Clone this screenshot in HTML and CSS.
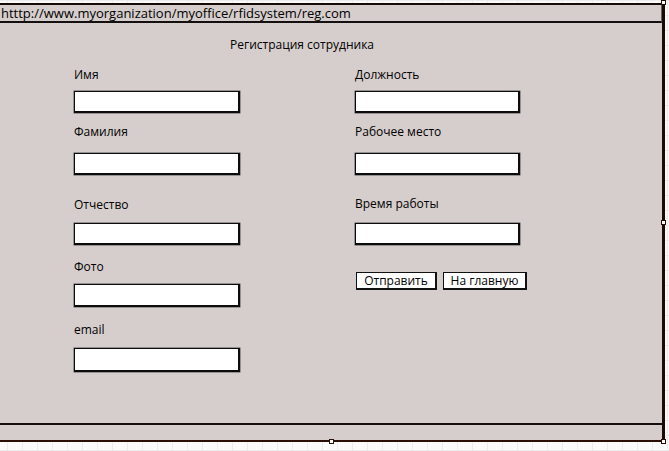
FILE: index.html
```html
<!DOCTYPE html>
<html lang="ru">
<head>
<meta charset="utf-8">
<title>Регистрация сотрудника</title>
<link rel="stylesheet" href="styles.css">
</head>
<body>
<div class="window">
  <div class="urlbar">htttp://www.myorganization/myoffice/rfidsystem/reg.com</div>
  <div class="content">
    <div class="title">Регистрация сотрудника</div>
    <div class="columns">
      <div class="col col-left">
        <div class="label">Имя</div>
        <div class="input in1"></div>
        <div class="label l2">Фамилия</div>
        <div class="input in2"></div>
        <div class="label l3">Отчество</div>
        <div class="input in3"></div>
        <div class="label l4">Фото</div>
        <div class="input in4"></div>
        <div class="label l5">email</div>
        <div class="input in5"></div>
      </div>
      <div class="col col-right">
        <div class="label">Должность</div>
        <div class="input in1"></div>
        <div class="label l2">Рабочее место</div>
        <div class="input in2"></div>
        <div class="label l3r">Время работы</div>
        <div class="input in3r"></div>
        <div class="buttons">
          <div class="btn btn-send">Отправить</div>
          <div class="btn btn-home">На главную</div>
        </div>
      </div>
    </div>
  </div>
  <div class="statusbar"></div>
  <span class="handle h-top"></span>
  <span class="handle h-right"></span>
  <span class="handle h-bottom"></span>
  <span class="handle h-corner"></span>
</div>
</body>
</html>
```
FILE: styles.css
```css
html, body {
  margin: 0;
  padding: 0;
}
body {
  width: 669px;
  height: 451px;
  overflow: hidden;
  background-color: #fafafa;
  background-image:
    linear-gradient(to right, #ececec 1px, transparent 1px),
    linear-gradient(to bottom, #ececec 1px, transparent 1px);
  background-size: 15px 15px;
  background-position: 7px 0;
  font-family: "Open Sans", "DejaVu Sans", sans-serif;
  color: #000;
}
.window {
  position: relative;
  margin-top: 3px;
  margin-left: -3px;
  width: 663px;
  background: #d6cecc;
  border-top: 2px solid #140a06;
  border-left: 2px solid #140a06;
  border-right: 3px solid #1e0a04;
  border-bottom: 2px solid #2a0e06;
}
.urlbar {
  height: 16px;
  padding-left: 2px;
  font-size: 13px;
  line-height: 17px;
  color: #000;
  border-bottom: 2px solid #141010;
  border-right: 1px solid #6a6262;
  white-space: nowrap;
  overflow: hidden;
}
.content {
  height: 400px;
  border-bottom: 2px solid #141010;
}
.title {
  padding-top: 14px;
  padding-left: 231px;
  font-size: 12px;
  line-height: 16px;
}
.columns {
  display: flex;
  padding-top: 14px;
  padding-left: 75px;
}
.col {
  display: flex;
  flex-direction: column;
  align-items: flex-start;
}
.col-left {
  width: 281px;
}
.label {
  font-size: 12px;
  line-height: 16px;
  height: 16px;
}
.input {
  background: #fff;
  border: 2px solid #0c0c0c;
  border-top-width: 1px;
  border-left-width: 1px;
  box-shadow: 0 0 0 0.5px #555;
  box-sizing: border-box;
  width: 166px;
  height: 22px;
}
.col-right .input {
  width: 165px;
}
.in1 { margin-top: 8px; }
.l2 { margin-top: 11px; }
.in2 { margin-top: 13px; }
.l3 { margin-top: 22px; }
.in3 { margin-top: 10px; }
.l4 { margin-top: 14px; }
.in4 { margin-top: 9px; height: 23px; }
.l5 { margin-top: 15px; }
.in5 { margin-top: 10px; height: 24px; }
.l3r { margin-top: 21px; }
.in3r { margin-top: 11px; }
.buttons {
  display: flex;
  gap: 6px;
  margin-top: 27px;
  margin-left: 1px;
}
.btn {
  box-sizing: border-box;
  height: 18px;
  background: #fff;
  border: 1px solid #111;
  border-right-width: 2px;
  border-bottom-width: 2px;
  font-size: 12px;
  line-height: 15px;
  text-align: center;
  color: #000;
}
.btn-send { width: 81px; }
.btn-home { width: 84px; }
.statusbar {
  height: 15px;
}
.handle {
  position: absolute;
  width: 5px;
  height: 5px;
  box-sizing: border-box;
  background: #fff;
  border: 1px solid #2a0e06;
}
.h-top { right: -4px; top: -5px; }
.h-right { right: -4px; top: 215px; }
.h-bottom { left: 330px; bottom: -4px; }
.h-corner { right: -4px; bottom: -4px; }
```
